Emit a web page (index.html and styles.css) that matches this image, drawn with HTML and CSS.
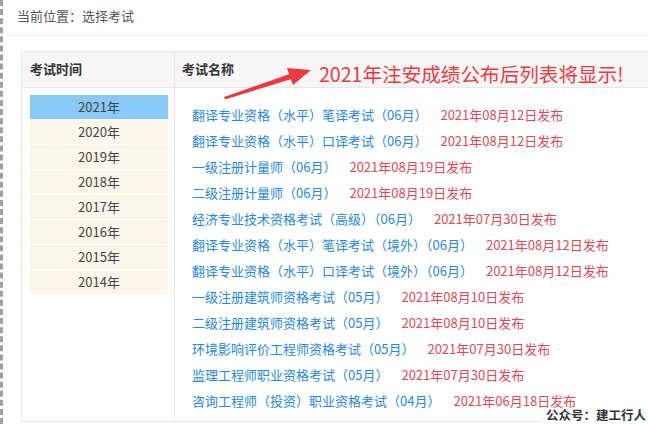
FILE: index.html
```html
<!DOCTYPE html>
<html>
  <head>
    <meta charset="UTF-8">
    <title>选择考试</title>
    <link rel="stylesheet" href="styles.css">
  </head>
  <body>
    <div id="page">
      <div class="crumb">当前位置：选择考试</div>

      <div id="exam-table">
        <div class="head-row">
          <div class="col-time">考试时间</div>
          <div class="col-name">考试名称</div>
        </div>
        <div class="body-row">
          <div class="col-time">
            <ul class="years">
              <li class="active">2021年</li>
              <li>2020年</li>
              <li>2019年</li>
              <li>2018年</li>
              <li>2017年</li>
              <li>2016年</li>
              <li>2015年</li>
              <li>2014年</li>
            </ul>
          </div>
          <div class="col-name">
            <ul class="exams">
              <li><a href="#">翻译专业资格（水平）笔译考试（06月）</a><span class="date">2021年08月12日发布</span></li>
              <li><a href="#">翻译专业资格（水平）口译考试（06月）</a><span class="date">2021年08月12日发布</span></li>
              <li><a href="#">一级注册计量师（06月）</a><span class="date">2021年08月19日发布</span></li>
              <li><a href="#">二级注册计量师（06月）</a><span class="date">2021年08月19日发布</span></li>
              <li><a href="#">经济专业技术资格考试（高级）（06月）</a><span class="date">2021年07月30日发布</span></li>
              <li><a href="#">翻译专业资格（水平）笔译考试（境外）（06月）</a><span class="date">2021年08月12日发布</span></li>
              <li><a href="#">翻译专业资格（水平）口译考试（境外）（06月）</a><span class="date">2021年08月12日发布</span></li>
              <li><a href="#">一级注册建筑师资格考试（05月）</a><span class="date">2021年08月10日发布</span></li>
              <li><a href="#">二级注册建筑师资格考试（05月）</a><span class="date">2021年08月10日发布</span></li>
              <li><a href="#">环境影响评价工程师资格考试（05月）</a><span class="date">2021年07月30日发布</span></li>
              <li><a href="#">监理工程师职业资格考试（05月）</a><span class="date">2021年07月30日发布</span></li>
              <li><a href="#">咨询工程师（投资）职业资格考试（04月）</a><span class="date">2021年06月18日发布</span></li>
            </ul>
          </div>
        </div>
      </div>

      <!-- annotation laid over the screenshot -->
      <div class="note">2021年注安成绩公布后列表将显示!</div>
      <svg class="arrow" width="110" height="60" viewBox="0 0 110 60">
        <path d="M14 42 L79 19.2 L77 13 L101 15 L83 30 L80.8 24.2 L15 44.6 Z" fill="#ee3a3f"/>
      </svg>
      <div class="mark">公众号：建工行人</div>
    </div>
  </body>
</html>
```

FILE: styles.css
```css
/* page frame */
html, body {
  margin: 0;
  padding: 0;
  background: #fff;
  overflow: hidden;
}

#page {
  position: relative;
  height: 424px;
  border-left: 3px dashed #a0a0a0;
  box-sizing: border-box;
  font-family: "Noto Sans CJK SC", "Noto Sans", sans-serif;
  font-size: 13px;
  color: #333;
}

.crumb {
  margin-left: 4px;
  padding: 6px 0 0 10px;
  height: 29px;
  line-height: 20px;
  color: #555;
  border-bottom: 1px solid #ececec;
}

/* table */
#exam-table {
  margin: 15px 0 0 18px;
  width: 640px;
  height: 371px;
  border: 1px solid #e8e8e8;
  border-right: none;
  box-sizing: border-box;
  display: flex;
  flex-direction: column;
}

.head-row {
  display: flex;
  height: 35px;
  background: #f6f6f6;
  border-bottom: 1px solid #e8e8e8;
  font-weight: bold;
  line-height: 34px;
}

.body-row {
  display: flex;
  flex: 1;
}

.col-time {
  width: 153px;
  border-right: 1px solid #e8e8e8;
  padding-left: 8px;
  box-sizing: border-box;
}

.col-name {
  flex: 1;
  padding-left: 8px;
}

.head-row .col-name {
  padding-left: 7px;
}

/* years */
.years {
  list-style: none;
  margin: 7px 0 0 0;
  padding: 0;
  width: 138px;
}

.years li {
  height: 24px;
  line-height: 24px;
  text-align: center;
  background: #fcf5ea;
  border-bottom: 1px solid #fff;
  color: #444;
}

.years li.active {
  background: #88c9f8;
}

/* exam list */
.exams {
  list-style: none;
  margin: 14px 0 0 0;
  padding: 0 0 0 9px;
}

.exams li {
  height: 26px;
  line-height: 26px;
  white-space: nowrap;
}

.exams a {
  color: #2589dc;
  text-decoration: none;
}

.date {
  margin-left: 13px;
  color: #e04856;
}

/* annotation */
.note {
  position: absolute;
  left: 316px;
  top: 60px;
  font-size: 19.6px;
  line-height: 28px;
  color: #ee3a3f;
  white-space: nowrap;
}

.arrow {
  position: absolute;
  left: 207px;
  top: 55px;
}

.mark {
  position: absolute;
  right: 2px;
  bottom: 2px;
  padding: 0 0 0 4px;
  background: #fff;
  font-size: 12.5px;
  font-weight: bold;
  line-height: 14px;
  color: #333;
}
```
